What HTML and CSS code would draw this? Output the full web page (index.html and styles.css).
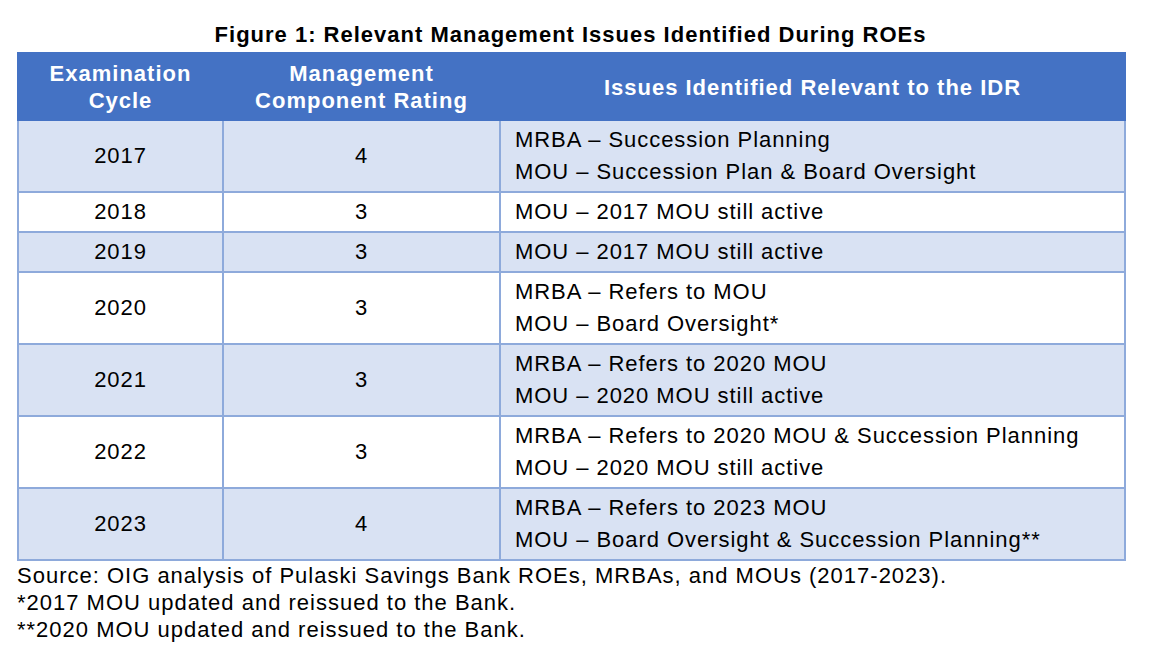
FILE: index.html
```html
<!DOCTYPE html>
<html>
<head>
<meta charset="utf-8">
<link rel="stylesheet" href="styles.css">
</head>
<body>
<div class="page">
  <h1 class="title">Figure 1: Relevant Management Issues Identified During ROEs</h1>
  <table class="grid">
    <colgroup>
      <col class="c1"><col class="c2"><col class="c3">
    </colgroup>
    <thead>
      <tr>
        <th>Examination<br>Cycle</th>
        <th>Management<br>Component Rating</th>
        <th>Issues Identified Relevant to the IDR</th>
      </tr>
    </thead>
    <tbody>
      <tr class="band">
        <td class="num">2017</td><td class="num">4</td>
        <td>MRBA – Succession Planning<br>MOU – Succession Plan &amp; Board Oversight</td>
      </tr>
      <tr>
        <td class="num">2018</td><td class="num">3</td>
        <td>MOU – 2017 MOU still active</td>
      </tr>
      <tr class="band">
        <td class="num">2019</td><td class="num">3</td>
        <td>MOU – 2017 MOU still active</td>
      </tr>
      <tr>
        <td class="num">2020</td><td class="num">3</td>
        <td>MRBA – Refers to MOU<br>MOU – Board Oversight*</td>
      </tr>
      <tr class="band">
        <td class="num">2021</td><td class="num">3</td>
        <td>MRBA – Refers to 2020 MOU<br>MOU – 2020 MOU still active</td>
      </tr>
      <tr>
        <td class="num">2022</td><td class="num">3</td>
        <td>MRBA – Refers to 2020 MOU &amp; Succession Planning<br>MOU – 2020 MOU still active</td>
      </tr>
      <tr class="band">
        <td class="num">2023</td><td class="num">4</td>
        <td>MRBA – Refers to 2023 MOU<br>MOU – Board Oversight &amp; Succession Planning**</td>
      </tr>
    </tbody>
  </table>
  <div class="notes">
    <p>Source: OIG analysis of Pulaski Savings Bank ROEs, MRBAs, and MOUs (2017-2023).</p>
    <p>*2017 MOU updated and reissued to the Bank.</p>
    <p>**2020 MOU updated and reissued to the Bank.</p>
  </div>
</div>
</body>
</html>
```

FILE: styles.css
```css
html, body {
  margin: 0;
  padding: 0;
  background: #ffffff;
}

body {
  font-family: "Liberation Sans", Arial, sans-serif;
  color: #000000;
}

.page {
  width: 1107px;
  padding: 22px 0 0 17px;
}

.title {
  margin: 0 0 4px;
  font-size: 22px;
  line-height: 26px;
  font-weight: bold;
  text-align: center;
  letter-spacing: 1px;
}

.grid {
  width: 1107px;
  border-collapse: collapse;
  table-layout: fixed;
  font-size: 22px;
  letter-spacing: 0.95px;
}

.c1 { width: 205px; }
.c2 { width: 277px; }
.c3 { width: 625px; }

.grid th {
  background: #4472c4;
  color: #ffffff;
  font-weight: bold;
  line-height: 27px;
  padding: 6px 6px 5px;
  text-align: center;
  border: 2px solid #4472c4;
  letter-spacing: 1px;
}

.grid td {
  border: 2px solid #8eaadb;
  line-height: 32px;
  padding: 3px 14px 3px;
  vertical-align: middle;
  text-align: left;
}

.grid td.num {
  text-align: center;
}

.grid tr.band td {
  background: #d9e2f3;
}

.notes {
  margin-top: 1px;
  font-size: 22px;
  line-height: 27px;
  letter-spacing: 1px;
}

.notes p {
  margin: 0;
}
```
